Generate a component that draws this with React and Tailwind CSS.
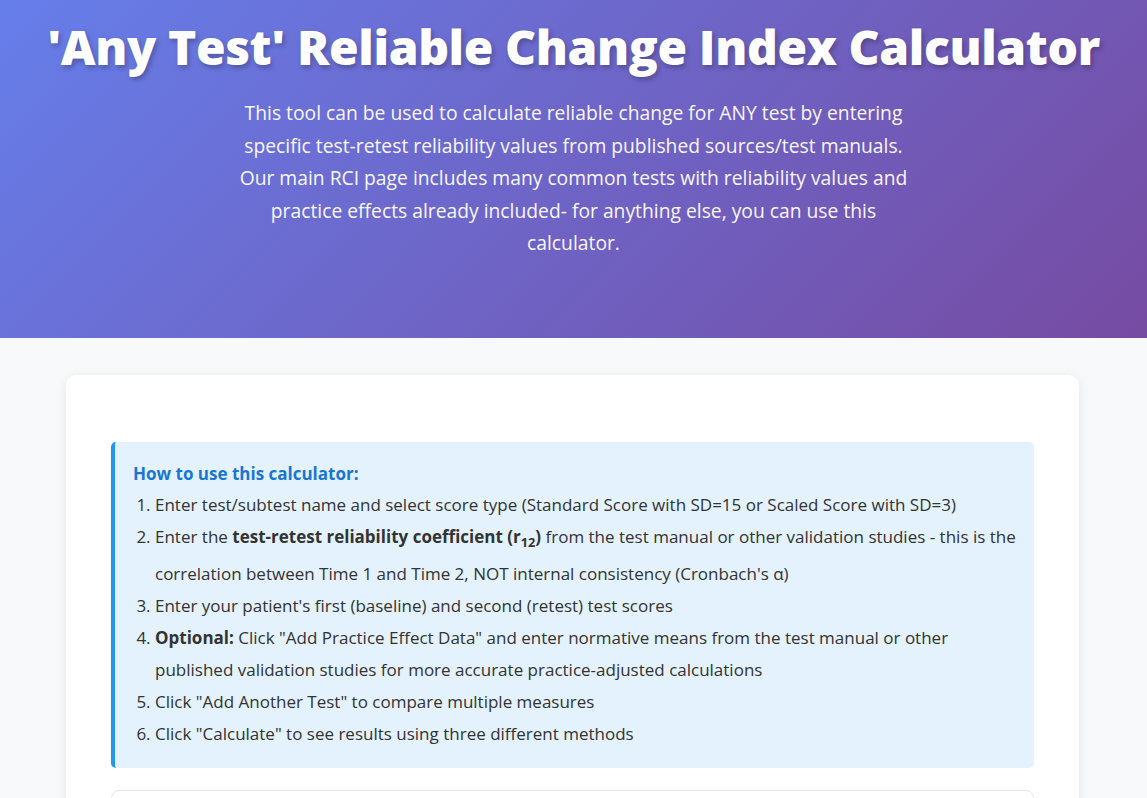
import React from 'react';

const steps = [
  <>Enter test/subtest name and select score type (Standard Score with SD=15 or Scaled Score with SD=3)</>,
  <>
    Enter the <strong>test-retest reliability coefficient (r<sub className="static align-sub text-[0.75em] leading-[31px]">12</sub>)</strong> from the test manual or other validation studies - this is the correlation between Time 1 and Time 2, NOT internal consistency (Cronbach's α)
  </>,
  <>Enter your patient's first (baseline) and second (retest) test scores</>,
  <>
    <strong>Optional:</strong> Click "Add Practice Effect Data" and enter normative means from the test manual or other published validation studies for more accurate practice-adjusted calculations
  </>,
  <>Click "Add Another Test" to compare multiple measures</>,
  <>Click "Calculate" to see results using three different methods</>,
];

const App = () => {
  return (
    <div className="min-h-screen bg-[#f8f9fa] font-['Open_Sans',sans-serif] text-[#333]">
      {/* Hero header */}
      <header className="h-[338px] bg-[linear-gradient(135deg,#667eea_0%,#764ba2_100%)] px-5 pt-[16px] text-center text-white">
        <h1 className="text-[48px] font-extrabold leading-[1.3] tracking-[-0.4px] [text-shadow:2px_3px_5px_rgba(0,0,0,0.25)]">
          'Any Test' Reliable Change Index Calculator
        </h1>
        <p className="mx-auto mt-[19px] max-w-[672px] text-[19.3px] leading-[32.5px] opacity-95">
          This tool can be used to calculate reliable change for ANY test by entering specific test-retest reliability values from published sources/test manuals. Our main RCI page includes many common tests with reliability values and practice effects already included- for anything else, you can use this calculator.
        </p>
      </header>

      <main className="pl-[66px] pr-[68px] pt-[37px] pb-10">
        <div className="rounded-[10px] bg-white px-[45px] pt-[67px] pb-10 shadow-[0_2px_12px_rgba(0,0,0,0.08)]">
          <div className="rounded-[5px] border-l-4 border-[#2196f3] bg-[#e3f2fd] pt-[19px] pb-[18px] pl-[18px] pr-4">
            <h3 className="mb-[2px] text-[17px] font-bold leading-[26px] text-[#1976d2]">How to use this calculator:</h3>
            <ol className="list-decimal pl-[22px] text-[17px] leading-[32px] text-[#333]">
              {steps.map((s, i) => (
                <li key={i}>{s}</li>
              ))}
            </ol>
          </div>

          <div className="mt-[22px] h-[200px] rounded-[8px] border border-[#e5e7eb] bg-white"></div>
        </div>
      </main>
    </div>
  );
};

export default App;
